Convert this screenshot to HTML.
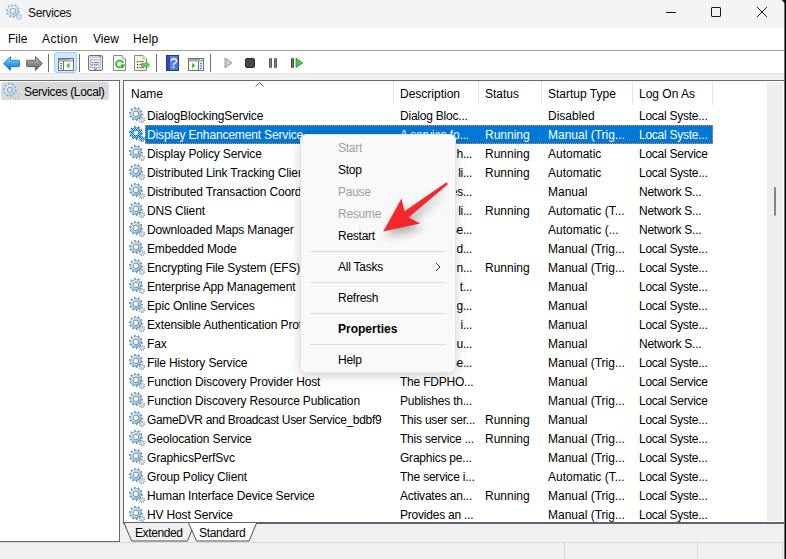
<!DOCTYPE html>
<html><head><meta charset="utf-8">
<style>
*{margin:0;padding:0;box-sizing:border-box}
html,body{width:786px;height:559px;overflow:hidden;background:#000}
body{font-family:"Liberation Sans",sans-serif;font-size:12px;color:#000;position:relative}
.abs{position:absolute}
#win{position:absolute;left:0;top:0;width:785px;height:559px;background:#f0f0f0;overflow:hidden;border-top-right-radius:5px;border-right:1px solid #6a707c}
#title{position:absolute;left:0;top:0;width:784px;height:28px;background:#f3f3f3}
#title .t{position:absolute;left:28px;top:6px;font-size:12px;letter-spacing:-0.35px;color:#111}
#menubar{position:absolute;left:0;top:28px;width:784px;height:22px;background:#fff}
#menubar span{position:absolute;top:4px}
#mline{position:absolute;left:0;top:50px;width:784px;height:1px;background:#a0a0a0}
#toolbar{position:absolute;left:0;top:51px;width:784px;height:22px;background:#fff}
#tbline{position:absolute;left:0;top:73px;width:784px;height:1px;background:#e3e3e3}
.sep{position:absolute;top:54px;width:1px;height:18px;background:#6e6e6e}
#left{position:absolute;left:0;top:80px;width:120px;height:462px;background:#fff;border-top:1px solid #646a74;border-right:1px solid #646a74;border-bottom:1px solid #646a74}
#lsel{position:absolute;left:1px;top:82px;width:108px;height:18px;background:#d9d9d9;border-radius:3px}
#right{position:absolute;left:123px;top:80px;width:661px;height:444px;background:#fff;border-top:1px solid #646a74;border-left:1px solid #646a74;border-bottom:2px solid #5f6570}
.hdr{position:absolute;top:87px}
.hsep{position:absolute;top:81px;width:1px;height:24px;background:#e5e5e5}
.row{position:absolute;left:124px;height:19px;width:643px}
.row span{position:absolute;top:3px;white-space:nowrap;overflow:hidden}
.gi{position:absolute;left:5px;top:1px;width:16px;height:16px}
.c0{left:21px;width:249px;letter-spacing:-0.15px}
.nm{position:static!important;padding:0 2px}
.c1{left:276px;letter-spacing:-0.22px}
.c1t{right:295px;text-align:right;letter-spacing:-0.3px}
.c2{left:361px}
.c3{left:424px}
.c4{left:515px;letter-spacing:-0.25px}
.row.sel .nm{color:#fff}
#selbg{position:absolute;left:145px;top:125px;width:568px;height:19px;background:#0078d7;outline:1px dotted #ff8728;outline-offset:-1px}
.row.sel span{color:#fff}
#sb{position:absolute;left:767px;top:82px;width:16px;height:439px;background:#eeeeee}
#thumb{position:absolute;left:774px;top:187px;width:2px;height:29px;background:#858585;border-radius:1px}
#tabs{position:absolute;left:123px;top:523px;height:18px}
#status{position:absolute;left:0;top:542px;width:784px;height:17px;background:#f0f0f0;border-top:1px solid #d9d9d9}
.ssep{position:absolute;top:543px;width:1px;height:16px;background:#d9d9d9}
#ctx{position:absolute;left:300px;top:134px;width:156px;height:239px;background:#f9f9f9;border:1px solid #e3e3e3;border-radius:6px;box-shadow:0 3px 12px rgba(0,0,0,0.18)}
#ctx .mi{position:absolute;left:37px;font-size:12px;letter-spacing:-0.25px}
#ctx .dis{color:#a0a0a0}
#ctx .hr{position:absolute;left:9px;width:136px;height:1px;background:#dcdcdc}
</style></head><body>
<svg width="0" height="0" style="position:absolute">
<defs>
<linearGradient id="gg" x1="0" y1="0" x2="1" y2="1">
<stop offset="0" stop-color="#cfe6f5"/><stop offset="0.5" stop-color="#8fb3cf"/><stop offset="1" stop-color="#5d87a8"/>
</linearGradient>
<radialGradient id="gr" cx="0.45" cy="0.45" r="0.55">
<stop offset="0" stop-color="#ffffff"/><stop offset="0.55" stop-color="#d0eaf8"/><stop offset="0.85" stop-color="#92b9d6"/><stop offset="1" stop-color="#6e95b6"/>
</radialGradient>
<radialGradient id="grl" cx="0.45" cy="0.45" r="0.55">
<stop offset="0" stop-color="#ffffff"/><stop offset="0.55" stop-color="#e2f4fc"/><stop offset="0.85" stop-color="#b2d8f0"/><stop offset="1" stop-color="#8db8da"/>
</radialGradient>
<pattern id="chk" width="2" height="2" patternUnits="userSpaceOnUse"><rect width="1" height="1" fill="#0078d7"/><rect x="1" y="1" width="1" height="1" fill="#0078d7"/></pattern>
<symbol id="gear" viewBox="0 0 16 16">
<path d="M12.40,6.81 L12.40,6.99 L13.90,7.11 L13.62,8.86 L12.16,8.52 L11.40,10.06 L11.30,10.20 L12.44,11.18 L11.18,12.44 L10.20,11.30 L8.68,12.10 L8.52,12.16 L8.86,13.62 L7.11,13.90 L6.99,12.40 L5.28,12.16 L5.12,12.10 L4.54,13.49 L2.96,12.68 L3.74,11.40 L2.50,10.20 L2.40,10.06 L1.12,10.84 L0.31,9.26 L1.70,8.68 L1.40,6.99 L1.40,6.81 L-0.10,6.69 L0.18,4.94 L1.64,5.28 L2.40,3.74 L2.50,3.60 L1.36,2.62 L2.62,1.36 L3.60,2.50 L5.12,1.70 L5.28,1.64 L4.94,0.18 L6.69,-0.10 L6.81,1.40 L8.52,1.64 L8.68,1.70 L9.26,0.31 L10.84,1.12 L10.06,2.40 L11.30,3.60 L11.40,3.74 L12.68,2.96 L13.49,4.54 L12.10,5.12Z M9.3,6.9 A2.4,2.4 0 1,0 4.5,6.9 A2.4,2.4 0 1,0 9.3,6.9Z" fill="#6787a8" fill-rule="evenodd"/>
<path d="M12.5,6.9 A5.6,5.6 0 1,0 1.3,6.9 A5.6,5.6 0 1,0 12.5,6.9Z M9.3,6.9 A2.4,2.4 0 1,0 4.5,6.9 A2.4,2.4 0 1,0 9.3,6.9Z" fill="url(#gr)" fill-rule="evenodd"/>
<circle cx="6.9" cy="6.9" r="2.85" fill="none" stroke="#6f8fab" stroke-width="1"/>
<path d="M15.30,12.85 L15.30,12.95 L16.20,13.02 L16.00,14.01 L15.14,13.74 L14.66,14.49 L14.59,14.56 L15.18,15.25 L14.33,15.81 L13.92,15.01 L13.05,15.20 L12.95,15.20 L12.88,16.10 L11.89,15.90 L12.16,15.04 L11.41,14.56 L11.34,14.49 L10.65,15.08 L10.09,14.23 L10.89,13.82 L10.70,12.95 L10.70,12.85 L9.80,12.78 L10.00,11.79 L10.86,12.06 L11.34,11.31 L11.41,11.24 L10.82,10.55 L11.67,9.99 L12.08,10.79 L12.95,10.60 L13.05,10.60 L13.12,9.70 L14.11,9.90 L13.84,10.76 L14.59,11.24 L14.66,11.31 L15.35,10.72 L15.91,11.57 L15.11,11.98Z M14,12.9 A1,1 0 1,0 12,12.9 A1,1 0 1,0 14,12.9Z" fill="#6282a3" fill-rule="evenodd"/>
<path d="M15.4,12.9 A2.4,2.4 0 1,0 10.6,12.9 A2.4,2.4 0 1,0 15.4,12.9Z M14,12.9 A1,1 0 1,0 12,12.9 A1,1 0 1,0 14,12.9Z" fill="#b9d7ea" fill-rule="evenodd"/>
</symbol>
<symbol id="gearl" viewBox="0 0 16 16">
<path d="M12.40,6.81 L12.40,6.99 L13.90,7.11 L13.62,8.86 L12.16,8.52 L11.40,10.06 L11.30,10.20 L12.44,11.18 L11.18,12.44 L10.20,11.30 L8.68,12.10 L8.52,12.16 L8.86,13.62 L7.11,13.90 L6.99,12.40 L5.28,12.16 L5.12,12.10 L4.54,13.49 L2.96,12.68 L3.74,11.40 L2.50,10.20 L2.40,10.06 L1.12,10.84 L0.31,9.26 L1.70,8.68 L1.40,6.99 L1.40,6.81 L-0.10,6.69 L0.18,4.94 L1.64,5.28 L2.40,3.74 L2.50,3.60 L1.36,2.62 L2.62,1.36 L3.60,2.50 L5.12,1.70 L5.28,1.64 L4.94,0.18 L6.69,-0.10 L6.81,1.40 L8.52,1.64 L8.68,1.70 L9.26,0.31 L10.84,1.12 L10.06,2.40 L11.30,3.60 L11.40,3.74 L12.68,2.96 L13.49,4.54 L12.10,5.12Z M9.3,6.9 A2.4,2.4 0 1,0 4.5,6.9 A2.4,2.4 0 1,0 9.3,6.9Z" fill="#86acd0" fill-rule="evenodd"/>
<path d="M12.5,6.9 A5.6,5.6 0 1,0 1.3,6.9 A5.6,5.6 0 1,0 12.5,6.9Z M9.3,6.9 A2.4,2.4 0 1,0 4.5,6.9 A2.4,2.4 0 1,0 9.3,6.9Z" fill="url(#grl)" fill-rule="evenodd"/>
<circle cx="6.9" cy="6.9" r="2.85" fill="none" stroke="#7d9cb8" stroke-width="0.9"/>
<path d="M15.30,12.85 L15.30,12.95 L16.20,13.02 L16.00,14.01 L15.14,13.74 L14.66,14.49 L14.59,14.56 L15.18,15.25 L14.33,15.81 L13.92,15.01 L13.05,15.20 L12.95,15.20 L12.88,16.10 L11.89,15.90 L12.16,15.04 L11.41,14.56 L11.34,14.49 L10.65,15.08 L10.09,14.23 L10.89,13.82 L10.70,12.95 L10.70,12.85 L9.80,12.78 L10.00,11.79 L10.86,12.06 L11.34,11.31 L11.41,11.24 L10.82,10.55 L11.67,9.99 L12.08,10.79 L12.95,10.60 L13.05,10.60 L13.12,9.70 L14.11,9.90 L13.84,10.76 L14.59,11.24 L14.66,11.31 L15.35,10.72 L15.91,11.57 L15.11,11.98Z M14,12.9 A1,1 0 1,0 12,12.9 A1,1 0 1,0 14,12.9Z" fill="#82a8c8" fill-rule="evenodd"/>
<path d="M15.4,12.9 A2.4,2.4 0 1,0 10.6,12.9 A2.4,2.4 0 1,0 15.4,12.9Z M14,12.9 A1,1 0 1,0 12,12.9 A1,1 0 1,0 14,12.9Z" fill="#c6e2f3" fill-rule="evenodd"/>
</symbol>
<symbol id="gears" viewBox="0 0 16 16">
<use href="#gear"/>
<path d="M12.40,6.81 L12.40,6.99 L13.90,7.11 L13.62,8.86 L12.16,8.52 L11.40,10.06 L11.30,10.20 L12.44,11.18 L11.18,12.44 L10.20,11.30 L8.68,12.10 L8.52,12.16 L8.86,13.62 L7.11,13.90 L6.99,12.40 L5.28,12.16 L5.12,12.10 L4.54,13.49 L2.96,12.68 L3.74,11.40 L2.50,10.20 L2.40,10.06 L1.12,10.84 L0.31,9.26 L1.70,8.68 L1.40,6.99 L1.40,6.81 L-0.10,6.69 L0.18,4.94 L1.64,5.28 L2.40,3.74 L2.50,3.60 L1.36,2.62 L2.62,1.36 L3.60,2.50 L5.12,1.70 L5.28,1.64 L4.94,0.18 L6.69,-0.10 L6.81,1.40 L8.52,1.64 L8.68,1.70 L9.26,0.31 L10.84,1.12 L10.06,2.40 L11.30,3.60 L11.40,3.74 L12.68,2.96 L13.49,4.54 L12.10,5.12Z" fill="url(#chk)"/>
<path d="M15.30,12.85 L15.30,12.95 L16.20,13.02 L16.00,14.01 L15.14,13.74 L14.66,14.49 L14.59,14.56 L15.18,15.25 L14.33,15.81 L13.92,15.01 L13.05,15.20 L12.95,15.20 L12.88,16.10 L11.89,15.90 L12.16,15.04 L11.41,14.56 L11.34,14.49 L10.65,15.08 L10.09,14.23 L10.89,13.82 L10.70,12.95 L10.70,12.85 L9.80,12.78 L10.00,11.79 L10.86,12.06 L11.34,11.31 L11.41,11.24 L10.82,10.55 L11.67,9.99 L12.08,10.79 L12.95,10.60 L13.05,10.60 L13.12,9.70 L14.11,9.90 L13.84,10.76 L14.59,11.24 L14.66,11.31 L15.35,10.72 L15.91,11.57 L15.11,11.98Z" fill="url(#chk)"/>
<circle cx="6.9" cy="6.9" r="2.2" fill="#fff"/>
</symbol>
</defs>
</svg>
<div id="win">
 <div id="title">
  <svg class="abs" style="left:6px;top:4px" width="16" height="16" viewBox="0 0 16 16"><use href="#gearl"/></svg>
  <span class="t">Services</span>
  <div class="abs" style="left:666px;top:12px;width:10px;height:1px;background:#1a1a1a"></div>
  <div class="abs" style="left:711px;top:7px;width:10px;height:10px;border:1px solid #1a1a1a;border-radius:1px"></div>
  <svg class="abs" style="left:756px;top:6px" width="12" height="12" viewBox="0 0 12 12"><path d="M1,1 L11,11 M11,1 L1,11" stroke="#1a1a1a" stroke-width="1"/></svg>
 </div>
 <div id="menubar">
  <span style="left:8px">File</span><span style="left:42px;letter-spacing:0.4px">Action</span><span style="left:93px">View</span><span style="left:133px;letter-spacing:0.2px">Help</span>
 </div>
 <div id="mline"></div>
 <div id="toolbar"></div>
 <div id="tbline"></div>
 <!-- toolbar icons -->
 <svg class="abs" style="left:3px;top:56px" width="17" height="15" viewBox="0 0 17 15"><defs><linearGradient id="ba" x1="0" y1="0" x2="0" y2="1"><stop offset="0" stop-color="#9fe0ff"/><stop offset="0.5" stop-color="#35a9f0"/><stop offset="1" stop-color="#0a6fc8"/></linearGradient></defs><path d="M0.6,7.5 L7.5,0.6 L7.5,4.3 L15.8,4.3 Q16.4,4.3 16.4,5 L16.4,10 Q16.4,10.7 15.8,10.7 L7.5,10.7 L7.5,14.4Z" fill="url(#ba)" stroke="#1c78c8" stroke-width="0.9"/></svg>
 <svg class="abs" style="left:26px;top:56px" width="17" height="15" viewBox="0 0 17 15"><defs><linearGradient id="fa" x1="0" y1="0" x2="0" y2="1"><stop offset="0" stop-color="#c4c4c4"/><stop offset="0.5" stop-color="#8e8e8e"/><stop offset="1" stop-color="#5e5e5e"/></linearGradient></defs><path d="M16.4,7.5 L9.5,0.6 L9.5,4.3 L1.2,4.3 Q0.6,4.3 0.6,5 L0.6,10 Q0.6,10.7 1.2,10.7 L9.5,10.7 L9.5,14.4Z" fill="url(#fa)" stroke="#5a5a5a" stroke-width="0.9"/></svg>
 <div class="sep" style="left:48px"></div>
 <div class="abs" style="left:54px;top:52px;width:23px;height:21px;background:#cce8ff;border:1px solid #99d1ff;border-radius:3px"></div>
 <svg class="abs" style="left:58px;top:58px" width="16" height="13" viewBox="0 0 16 13"><rect x="0.5" y="0.5" width="15" height="12" fill="#f7f7f7" stroke="#707070"/><rect x="1" y="1" width="14" height="1.5" fill="#9aa0a8"/><rect x="12" y="1" width="1" height="1" fill="#fff"/><rect x="13.5" y="1" width="1" height="1" fill="#fff"/><line x1="1" y1="3" x2="15" y2="3" stroke="#8a8a8a" stroke-width="0.8"/><line x1="5.5" y1="3" x2="5.5" y2="12.5" stroke="#707070"/><rect x="2" y="5" width="2" height="1.2" fill="#3a86d6"/><rect x="2" y="7.4" width="2" height="1.2" fill="#3a86d6"/><rect x="2" y="9.8" width="2" height="1.2" fill="#3a86d6"/><path d="M11.5,4.8 L8.3,7.6 L11.5,10.4Z" fill="#3cbf3c"/></svg>
 <div class="sep" style="left:79px"></div>
 <svg class="abs" style="left:88px;top:55px" width="15" height="16" viewBox="0 0 15 16"><rect x="0.5" y="0.5" width="14" height="15" rx="1.5" fill="#eef1f4" stroke="#6e6e6e"/><rect x="1.2" y="1.2" width="12.6" height="1.8" fill="#c6ced8"/><rect x="11.5" y="1.3" width="1.3" height="1.2" fill="#556070"/><rect x="2.5" y="4.5" width="10" height="8" fill="#e4e9f0" stroke="#97a3b3" stroke-width="0.7"/><rect x="5" y="4" width="2.2" height="1.2" fill="#b8c2ce"/><rect x="8" y="4" width="2.2" height="1.2" fill="#b8c2ce"/><rect x="3.6" y="7" width="1.2" height="1.2" fill="#1e9af0"/><rect x="5.8" y="7.1" width="5" height="1" fill="#7a8494"/><rect x="3.6" y="9.2" width="1.2" height="1.2" fill="#555"/><rect x="5.8" y="9.3" width="5" height="1" fill="#7a8494"/><rect x="6" y="13.3" width="3" height="1.7" fill="#38b4f4"/><rect x="10" y="13.5" width="3" height="1" fill="#c0c0c0"/></svg>
 <svg class="abs" style="left:113px;top:55px" width="13" height="16" viewBox="0 0 13 16"><path d="M0.5,0.5 L9,0.5 L12.5,4 L12.5,15.5 L0.5,15.5Z" fill="#fafafa" stroke="#8a8a8a"/><path d="M9,0.5 L9,4 L12.5,4" fill="#e8e8e8" stroke="#9a9a9a" stroke-width="0.7"/><path d="M9.3,11.2 A3.5,3.5 0 1 1 10,8.2" fill="none" stroke="#3cc43c" stroke-width="2.1"/><path d="M7.6,9.4 L12.2,9.6 L9.6,13.4Z" fill="#2aa82a"/></svg>
 <svg class="abs" style="left:134px;top:55px" width="17" height="16" viewBox="0 0 17 16"><path d="M0.5,0.5 L9,0.5 L12.5,4 L12.5,15.5 L0.5,15.5Z" fill="#fbf4dc" stroke="#8a8a8a"/><path d="M9,0.5 L9,4 L12.5,4" fill="#eee" stroke="#9a9a9a" stroke-width="0.7"/><rect x="3" y="6" width="1.2" height="1.2" fill="#333"/><rect x="3" y="9" width="1.2" height="1.2" fill="#333"/><rect x="3" y="12" width="1.2" height="1.2" fill="#333"/><rect x="5.2" y="6.1" width="4.8" height="1" fill="#7a74a8"/><rect x="5.2" y="9.1" width="4.8" height="1" fill="#7a74a8"/><rect x="5.2" y="12.1" width="4.8" height="1" fill="#7a74a8"/><path d="M7.5,8.6 L12,8.6 L12,6.6 L15.8,10.1 L12,13.6 L12,11.6 L7.5,11.6Z" fill="#5fd05f" stroke="#2ea02e" stroke-width="0.6"/></svg>
 <div class="sep" style="left:156px"></div>
 <svg class="abs" style="left:166px;top:55px" width="13" height="16" viewBox="0 0 13 16"><defs><linearGradient id="hq" x1="0" y1="0" x2="1" y2="0"><stop offset="0" stop-color="#2c48b8"/><stop offset="0.25" stop-color="#2c48b8"/><stop offset="0.26" stop-color="#5b86e6"/><stop offset="1" stop-color="#4a72d8"/></linearGradient></defs><rect x="0.5" y="0.5" width="12" height="15" fill="url(#hq)" stroke="#1d3a9c"/><text x="7.6" y="13" text-anchor="middle" font-family="Liberation Sans" font-size="14" fill="#fff">?</text></svg>
 <svg class="abs" style="left:188px;top:58px" width="16" height="13" viewBox="0 0 16 13"><rect x="0.5" y="0.5" width="15" height="12" fill="#f7f7f7" stroke="#707070"/><rect x="1" y="1" width="14" height="1.5" fill="#9aa0a8"/><rect x="12" y="1" width="1" height="1" fill="#fff"/><rect x="13.5" y="1" width="1" height="1" fill="#fff"/><line x1="1" y1="3" x2="15" y2="3" stroke="#8a8a8a" stroke-width="0.8"/><line x1="10.5" y1="3" x2="10.5" y2="12.5" stroke="#707070"/><rect x="12" y="5" width="2" height="1.2" fill="#3a86d6"/><rect x="12" y="7.4" width="2" height="1.2" fill="#3a86d6"/><rect x="12" y="9.8" width="2" height="1.2" fill="#3a86d6"/><path d="M4,4.8 L7.2,7.6 L4,10.4Z" fill="#3cbf3c"/></svg>
 <div class="sep" style="left:210px"></div>
 <svg class="abs" style="left:224px;top:57px" width="9" height="12" viewBox="0 0 9 12"><path d="M1,1 L7.8,5.9 L1,10.8Z" fill="#cdcdcd" stroke="#8e8e8e" stroke-width="0.9" stroke-linejoin="round"/></svg>
 <div class="abs" style="left:245px;top:58px;width:10px;height:10px;background:#484848;border:1px solid #2a2a2a;border-radius:2px"></div>
 <div class="abs" style="left:269px;top:58px;width:3px;height:10px;background:#8a8a8a;border:1px solid #555;border-radius:1px"></div>
 <div class="abs" style="left:274px;top:58px;width:3px;height:10px;background:#8a8a8a;border:1px solid #555;border-radius:1px"></div>
 <div class="abs" style="left:291px;top:58px;width:3px;height:10px;background:#7a7a7a;border:1px solid #444;border-radius:1px"></div>
 <svg class="abs" style="left:295px;top:57px" width="9" height="12" viewBox="0 0 9 12"><path d="M1,1 L7.8,5.9 L1,10.8Z" fill="#46c846" stroke="#2a9a2a" stroke-width="0.8" stroke-linejoin="round"/></svg>

 <div id="left"></div>
 <div id="lsel"></div>
 <svg class="abs" style="left:3px;top:83px" width="16" height="16" viewBox="0 0 16 16"><use href="#gearl"/></svg>
 <span class="abs" style="left:24px;top:85px;letter-spacing:-0.35px">Services (Local)</span>

 <div id="right"></div>
 <span class="hdr" style="left:131px">Name</span>
 <svg class="abs" style="left:255px;top:82px" width="9" height="5" viewBox="0 0 9 5"><path d="M0.5,4.5 L4.5,0.5 L8.5,4.5" fill="none" stroke="#5a5a5a" stroke-width="1"/></svg>
 <div class="hsep" style="left:393px"></div>
 <span class="hdr" style="left:400px">Description</span>
 <div class="hsep" style="left:478px"></div>
 <span class="hdr" style="left:485px">Status</span>
 <div class="hsep" style="left:541px"></div>
 <span class="hdr" style="left:548px">Startup Type</span>
 <div class="hsep" style="left:632px"></div>
 <span class="hdr" style="left:639px">Log On As</span>
 <div class="hsep" style="left:712px"></div>
 <div id="selbg"></div>
<div class="row" style="top:106px"><svg class="gi" viewBox="0 0 16 16"><use href="#gear"/></svg><span class="c0"><span class="nm">DialogBlockingService</span></span><span class="c1">Dialog Bloc...</span><span class="c2"></span><span class="c3">Disabled</span><span class="c4">Local Syste...</span></div>
<div class="row sel" style="top:125px"><svg class="gi" viewBox="0 0 16 16"><use href="#gears"/></svg><span class="c0"><span class="nm">Display Enhancement Service</span></span><span class="c1">A service fo...</span><span class="c2">Running</span><span class="c3">Manual (Trig...</span><span class="c4">Local Syste...</span></div>
<div class="row" style="top:144px"><svg class="gi" viewBox="0 0 16 16"><use href="#gear"/></svg><span class="c0"><span class="nm">Display Policy Service</span></span><span class="c1t">h...</span><span class="c2">Running</span><span class="c3">Automatic</span><span class="c4">Local Service</span></div>
<div class="row" style="top:163px"><svg class="gi" viewBox="0 0 16 16"><use href="#gear"/></svg><span class="c0"><span class="nm">Distributed Link Tracking Client</span></span><span class="c1t">li...</span><span class="c2">Running</span><span class="c3">Automatic</span><span class="c4">Local Syste...</span></div>
<div class="row" style="top:182px"><svg class="gi" viewBox="0 0 16 16"><use href="#gear"/></svg><span class="c0"><span class="nm">Distributed Transaction Coordinator</span></span><span class="c1t">es...</span><span class="c2"></span><span class="c3">Manual</span><span class="c4">Network S...</span></div>
<div class="row" style="top:201px"><svg class="gi" viewBox="0 0 16 16"><use href="#gear"/></svg><span class="c0"><span class="nm">DNS Client</span></span><span class="c1t">li...</span><span class="c2">Running</span><span class="c3">Automatic (T...</span><span class="c4">Network S...</span></div>
<div class="row" style="top:220px"><svg class="gi" viewBox="0 0 16 16"><use href="#gear"/></svg><span class="c0"><span class="nm">Downloaded Maps Manager</span></span><span class="c1t">se...</span><span class="c2"></span><span class="c3">Automatic (...</span><span class="c4">Network S...</span></div>
<div class="row" style="top:239px"><svg class="gi" viewBox="0 0 16 16"><use href="#gear"/></svg><span class="c0"><span class="nm">Embedded Mode</span></span><span class="c1t">d...</span><span class="c2"></span><span class="c3">Manual (Trig...</span><span class="c4">Local Syste...</span></div>
<div class="row" style="top:258px"><svg class="gi" viewBox="0 0 16 16"><use href="#gear"/></svg><span class="c0"><span class="nm">Encrypting File System (EFS)</span></span><span class="c1t">n...</span><span class="c2">Running</span><span class="c3">Manual (Trig...</span><span class="c4">Local Syste...</span></div>
<div class="row" style="top:277px"><svg class="gi" viewBox="0 0 16 16"><use href="#gear"/></svg><span class="c0"><span class="nm">Enterprise App Management</span></span><span class="c1t">t...</span><span class="c2"></span><span class="c3">Manual</span><span class="c4">Local Syste...</span></div>
<div class="row" style="top:296px"><svg class="gi" viewBox="0 0 16 16"><use href="#gear"/></svg><span class="c0"><span class="nm">Epic Online Services</span></span><span class="c1t">g...</span><span class="c2"></span><span class="c3">Manual</span><span class="c4">Local Syste...</span></div>
<div class="row" style="top:315px"><svg class="gi" viewBox="0 0 16 16"><use href="#gear"/></svg><span class="c0"><span class="nm">Extensible Authentication Protocol</span></span><span class="c1t">i...</span><span class="c2"></span><span class="c3">Manual</span><span class="c4">Local Syste...</span></div>
<div class="row" style="top:334px"><svg class="gi" viewBox="0 0 16 16"><use href="#gear"/></svg><span class="c0"><span class="nm">Fax</span></span><span class="c1t">u...</span><span class="c2"></span><span class="c3">Manual</span><span class="c4">Network S...</span></div>
<div class="row" style="top:353px"><svg class="gi" viewBox="0 0 16 16"><use href="#gear"/></svg><span class="c0"><span class="nm">File History Service</span></span><span class="c1t">se...</span><span class="c2"></span><span class="c3">Manual (Trig...</span><span class="c4">Local Syste...</span></div>
<div class="row" style="top:372px"><svg class="gi" viewBox="0 0 16 16"><use href="#gear"/></svg><span class="c0"><span class="nm">Function Discovery Provider Host</span></span><span class="c1">The FDPHO...</span><span class="c2"></span><span class="c3">Manual</span><span class="c4">Local Service</span></div>
<div class="row" style="top:391px"><svg class="gi" viewBox="0 0 16 16"><use href="#gear"/></svg><span class="c0"><span class="nm">Function Discovery Resource Publication</span></span><span class="c1">Publishes th...</span><span class="c2"></span><span class="c3">Manual (Trig...</span><span class="c4">Local Service</span></div>
<div class="row" style="top:410px"><svg class="gi" viewBox="0 0 16 16"><use href="#gear"/></svg><span class="c0"><span class="nm" style="letter-spacing:-0.33px">GameDVR and Broadcast User Service_bdbf9</span></span><span class="c1">This user ser...</span><span class="c2">Running</span><span class="c3">Manual</span><span class="c4">Local Syste...</span></div>
<div class="row" style="top:429px"><svg class="gi" viewBox="0 0 16 16"><use href="#gear"/></svg><span class="c0"><span class="nm">Geolocation Service</span></span><span class="c1">This service ...</span><span class="c2">Running</span><span class="c3">Manual (Trig...</span><span class="c4">Local Syste...</span></div>
<div class="row" style="top:448px"><svg class="gi" viewBox="0 0 16 16"><use href="#gear"/></svg><span class="c0"><span class="nm">GraphicsPerfSvc</span></span><span class="c1">Graphics pe...</span><span class="c2"></span><span class="c3">Manual (Trig...</span><span class="c4">Local Syste...</span></div>
<div class="row" style="top:467px"><svg class="gi" viewBox="0 0 16 16"><use href="#gear"/></svg><span class="c0"><span class="nm">Group Policy Client</span></span><span class="c1">The service i...</span><span class="c2"></span><span class="c3">Automatic (T...</span><span class="c4">Local Syste...</span></div>
<div class="row" style="top:486px"><svg class="gi" viewBox="0 0 16 16"><use href="#gear"/></svg><span class="c0"><span class="nm">Human Interface Device Service</span></span><span class="c1">Activates an...</span><span class="c2">Running</span><span class="c3">Manual (Trig...</span><span class="c4">Local Syste...</span></div>
<div class="row" style="top:505px"><svg class="gi" viewBox="0 0 16 16"><use href="#gear"/></svg><span class="c0"><span class="nm">HV Host Service</span></span><span class="c1">Provides an ...</span><span class="c2"></span><span class="c3">Manual (Trig...</span><span class="c4">Local Syste...</span></div>
 <div id="sb"></div>
 <div id="thumb"></div>
 <svg class="abs" style="left:123px;top:523px" width="140" height="19" viewBox="0 0 140 19">
  <path d="M1,0 L8.6,18 L64.3,18 L72,0Z" fill="#f0f0f0"/>
  <path d="M1,0 L8.6,18 L64.3,18 L68.8,7.5" fill="none" stroke="#505050" stroke-width="1"/>
  <path d="M65.6,0 L73.6,18 L126.1,18 L133.6,0Z" fill="#fff"/>
  <path d="M65.6,0 L73.6,18 L126.1,18 L133.6,0" fill="none" stroke="#505050" stroke-width="1"/>
 </svg>
 <span class="abs" style="left:135px;top:526px;letter-spacing:-0.4px">Extended</span>
 <span class="abs" style="left:199px;top:526px;letter-spacing:-0.3px">Standard</span>
 <div id="status"></div>
 <div class="ssep" style="left:564px"></div>
 <div class="ssep" style="left:697px"></div>
 <div class="ssep" style="left:782px"></div>

 <div id="ctx">
  <span class="mi dis" style="top:6px">Start</span>
  <span class="mi" style="top:28px">Stop</span>
  <span class="mi dis" style="top:50px">Pause</span>
  <span class="mi dis" style="top:72px">Resume</span>
  <span class="mi" style="top:94px">Restart</span>
  <div class="hr" style="top:116px"></div>
  <span class="mi" style="top:125px">All Tasks</span>
  <svg class="abs" style="left:134px;top:127px" width="6" height="10" viewBox="0 0 6 10"><path d="M1,1 L5,5 L1,9" fill="none" stroke="#333" stroke-width="1"/></svg>
  <div class="hr" style="top:147px"></div>
  <span class="mi" style="top:156px">Refresh</span>
  <div class="hr" style="top:178px"></div>
  <span class="mi" style="top:187px;font-weight:bold;letter-spacing:0">Properties</span>
  <div class="hr" style="top:209px"></div>
  <span class="mi" style="top:218px">Help</span>
 </div>
 <!-- red arrow -->
 <svg class="abs" style="left:370px;top:170px;overflow:visible" width="90" height="80" viewBox="370 170 90 80"><defs><filter id="ash" x="-50%" y="-50%" width="200%" height="200%"><feGaussianBlur stdDeviation="5"/></filter></defs><path d="M386,237 L404,204 L407,216.5 L449,188.5 L411.5,223 L423,229Z" fill="rgba(0,0,0,0.3)" filter="url(#ash)"/><path d="M383.2,231.5 L401.5,198.5 L404.5,211.2 L446.6,182.3 L447.9,184.2 L408.6,217.4 L420.2,223.6Z" fill="#f4282c"/></svg>
</div>
</body></html>
